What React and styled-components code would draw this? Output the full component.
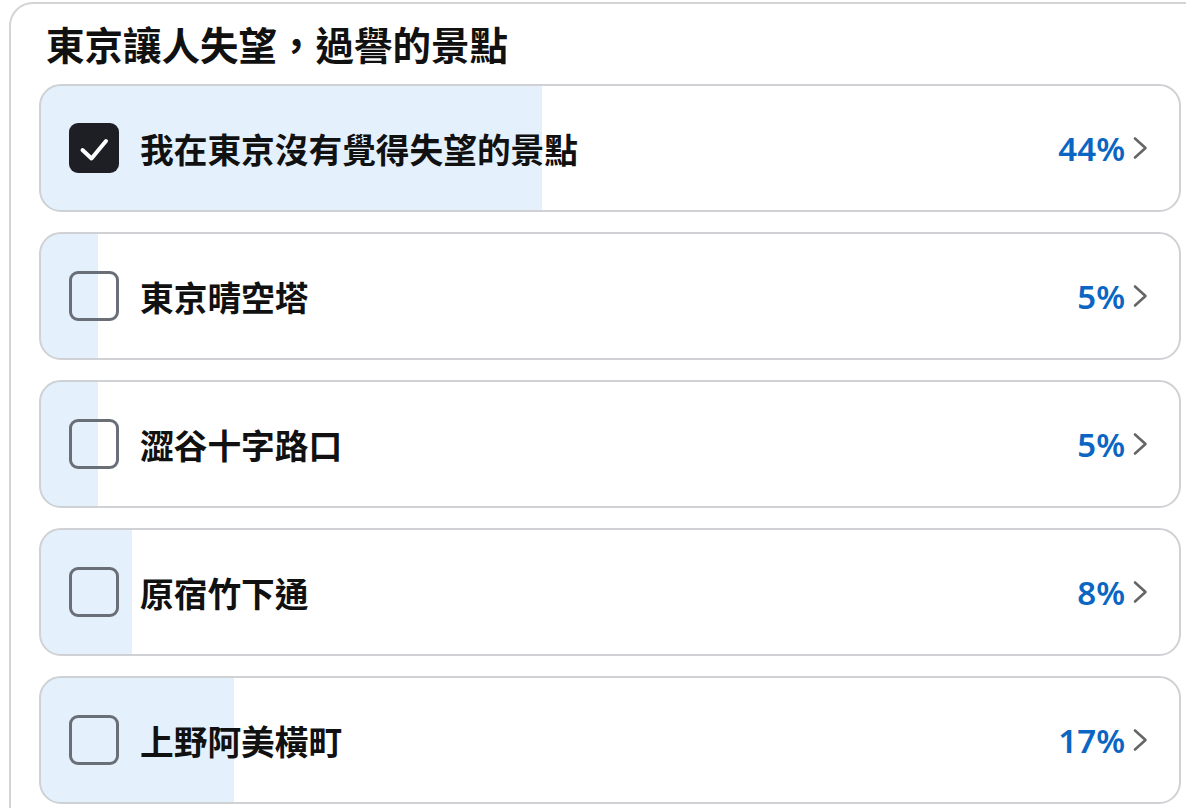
import React from 'react';
import styled, { createGlobalStyle } from 'styled-components';

const GlobalStyle = createGlobalStyle`
  html, body {
    margin: 0;
    padding: 0;
    background: #ffffff;
    overflow: hidden;
  }
  body {
    font-family: "Noto Sans CJK TC", "Noto Sans", sans-serif;
  }
`;

const Card = styled.section`
  box-sizing: border-box;
  width: 1202px;
  margin: 2px 0 0 9px;
  padding: 0 28px 40px 28px;
  border: 2px solid #d4d4d4;
  border-radius: 24px;
  background: #fff;
`;

const Title = styled.h2`
  margin: 0;
  padding: 15px 0 16px 7px;
  font-size: 38.5px;
  line-height: 49px;
  font-weight: 700;
  color: #111;
`;

const List = styled.div`
  display: flex;
  flex-direction: column;
  gap: 20px;
`;

const Option = styled.div`
  box-sizing: border-box;
  width: 1142px;
  height: 128px;
  display: flex;
  align-items: center;
  padding: 0 30px 0 28px;
  border: 2px solid #cfd1d4;
  border-radius: 22px;
  background: linear-gradient(
    to right,
    #e4f1fd ${(p) => p.$pct}%,
    #ffffff ${(p) => p.$pct}%
  );
`;

const Box = styled.span`
  box-sizing: border-box;
  flex: none;
  width: 50px;
  height: 50px;
  border-radius: 9px;
  display: flex;
  align-items: center;
  justify-content: center;
  border: ${(p) => (p.$checked ? 'none' : '3px solid #6a6f77')};
  background: ${(p) => (p.$checked ? '#1d1f24' : 'transparent')};
`;

const Label = styled.span`
  flex: 1;
  margin-left: 21px;
  font-size: 33.7px;
  font-weight: 700;
  color: #111;
  white-space: nowrap;
`;

const Percent = styled.span`
  font-family: "Noto Sans", "Liberation Sans", sans-serif;
  font-size: 33px;
  font-weight: 600;
  color: #0a66c2;
`;

const Chevron = styled.svg`
  margin-left: 7px;
  width: 17px;
  height: 26px;
  flex: none;
`;

const options = [
  { label: '我在東京沒有覺得失望的景點', pct: 44, checked: true },
  { label: '東京晴空塔', pct: 5 },
  { label: '澀谷十字路口', pct: 5 },
  { label: '原宿竹下通', pct: 8 },
  { label: '上野阿美橫町', pct: 17 },
];

const Check = () => (
  <svg width="34" height="34" viewBox="0 0 34 34" fill="none">
    <path d="M5.5 19 L14.5 27.5 L29 10" stroke="#fff" strokeWidth="4" strokeLinecap="round" strokeLinejoin="round" />
  </svg>
);

export default function App() {
  return (
    <>
      <GlobalStyle />
      <Card>
        <Title>東京讓人失望，過譽的景點</Title>
        <List>
          {options.map((o) => (
            <Option key={o.label} $pct={o.pct}>
              <Box $checked={o.checked}>{o.checked && <Check />}</Box>
              <Label>{o.label}</Label>
              <Percent>{o.pct}%</Percent>
              <Chevron viewBox="0 0 17 26" fill="none">
                <path d="M3 3.5 L13.5 13 L3 22.5" stroke="#666" strokeWidth="2.6" strokeLinecap="round" strokeLinejoin="round" />
              </Chevron>
            </Option>
          ))}
        </List>
      </Card>
    </>
  );
}
